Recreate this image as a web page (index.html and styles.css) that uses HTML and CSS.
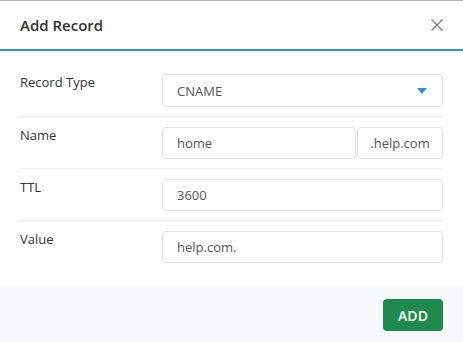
FILE: index.html
```html
<!DOCTYPE html>
<html lang="en">
<head>
  <meta charset="UTF-8">
  <title>Add Record</title>
  <link rel="stylesheet" href="styles.css">
</head>
<body>

<div class="modal">
  <div class="modal-header">
    <h2 class="title">Add Record</h2>
    <button class="close" aria-label="Close">
      <svg width="12" height="12" viewBox="0 0 12 12"><path d="M0.5 0.5 L11.5 11.5 M11.5 0.5 L0.5 11.5" stroke="#777" stroke-width="1.2" fill="none"/></svg>
    </button>
  </div>

  <div class="modal-body">
    <div class="row">
      <label class="label">Record Type</label>
      <div class="field select">
        <span>CNAME</span>
        <svg class="caret" width="10" height="6" viewBox="0 0 10 6"><path d="M0 0 H10 L5 6 Z" fill="#2f8fd6"/></svg>
      </div>
    </div>
    <div class="row">
      <label class="label">Name</label>
      <div class="group">
        <div class="field grow">home</div>
        <div class="field suffix">.help.com</div>
      </div>
    </div>
    <div class="row">
      <label class="label">TTL</label>
      <div class="field">3600</div>
    </div>
    <div class="row">
      <label class="label">Value</label>
      <div class="field">help.com.</div>
    </div>
  </div>

  <div class="modal-footer">
    <button class="btn-add">ADD</button>
  </div>
</div>

</body>
</html>
```

FILE: styles.css
```css
* { box-sizing: border-box; }

body {
  margin: 0;
  padding: 0;
  background: #fff;
  font-family: "Open Sans", sans-serif;
  color: #333;
}

.modal {
  width: 463px;
  height: 342px;
  border-top: 1px solid #b5b5b5;
  display: flex;
  flex-direction: column;
}

.modal-header {
  height: 50px;
  padding: 0 20px;
  display: flex;
  align-items: center;
  justify-content: space-between;
  border-bottom: 2px solid #3a8fcf;
}

.title {
  margin: 0;
  font-size: 15px;
  font-weight: 600;
  color: #333;
}

.close {
  border: none;
  background: none;
  padding: 0;
  display: flex;
  cursor: pointer;
}

.modal-body {
  padding: 23px 20px 24px;
}

.row {
  display: flex;
  padding: 10px 0 9px;
  border-bottom: 1px solid #eee;
}

.row:first-child { padding-top: 0; }
.row:last-child { padding-bottom: 0; border-bottom: none; }

.label {
  width: 142px;
  flex-shrink: 0;
  font-size: 13px;
  line-height: 16px;
  color: #333;
}

.field {
  flex: 1;
  height: 32px;
  padding: 0 14px;
  display: flex;
  align-items: center;
  border: 1px solid #e2e2e2;
  border-radius: 4px;
  font-size: 13px;
  color: #555;
}

.select {
  height: 33px;
  justify-content: space-between;
}

.caret { margin-right: 1px; }

.group {
  flex: 1;
  display: flex;
}

.group .grow { flex: 1; }

.suffix {
  flex: 0 0 86px;
  justify-content: center;
  padding: 0;
  margin-left: 1px;
}

.modal-footer {
  flex: 1;
  background: #f8f9fb;
  display: flex;
  justify-content: flex-end;
  align-items: flex-start;
  padding: 12px 20px 0;
}

.btn-add {
  width: 60px;
  height: 32px;
  border: none;
  border-radius: 4px;
  background: #1f8a4d;
  color: #fff;
  font-family: "Open Sans", sans-serif;
  font-size: 14px;
  font-weight: 600;
  cursor: pointer;
}
```
